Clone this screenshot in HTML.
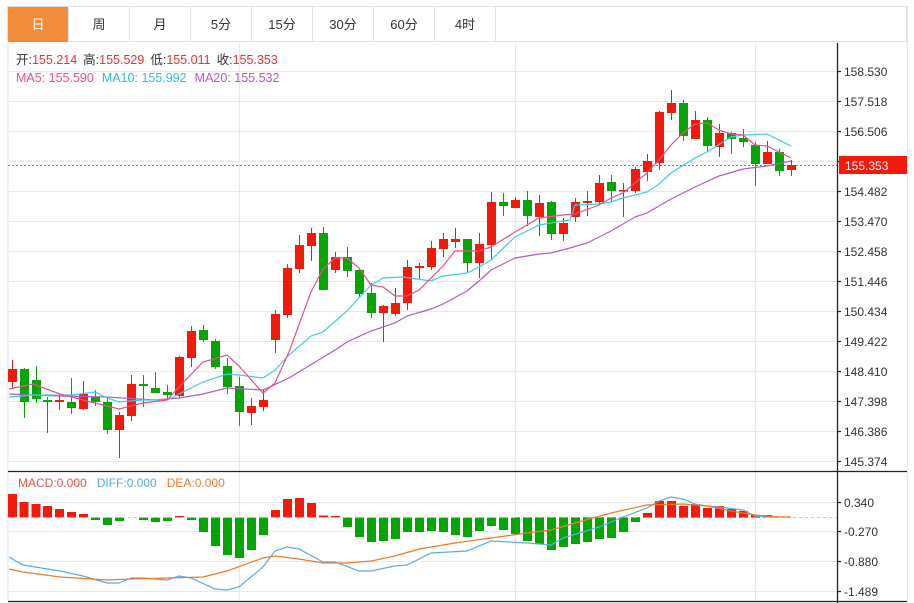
<!DOCTYPE html>
<html><head><meta charset="utf-8"><style>
html,body{margin:0;padding:0;background:#fff;width:914px;height:603px;overflow:hidden;font-family:"Liberation Sans","Noto Sans CJK SC",sans-serif}
.tabs{position:absolute;left:7px;top:6px;height:36px;width:900px;border:1px solid #dde3ea;box-sizing:border-box;}
.tab{position:absolute;top:0;height:35px;width:61px;line-height:35px;text-align:center;font-size:13px;color:#333;border-right:1px solid #dde3ea;box-sizing:border-box}
svg{position:absolute;left:0;top:0}
</style></head><body>
<div class="tabs">
<div class="tab" style="left:0;background:#f08c3a;color:#fff">日</div>
<div class="tab" style="left:61px">周</div>
<div class="tab" style="left:122px">月</div>
<div class="tab" style="left:183px">5分</div>
<div class="tab" style="left:244px">15分</div>
<div class="tab" style="left:305px">30分</div>
<div class="tab" style="left:366px">60分</div>
<div class="tab" style="left:427px">4时</div>
</div>
<svg width="914" height="603" xmlns="http://www.w3.org/2000/svg" font-family="Liberation Sans, Noto Sans CJK SC, sans-serif">
<g stroke="#e3e9ef" stroke-width="1" fill="none">
<path d="M8 71.5H837M8 101.5H837M8 131.5H837M8 161.5H837M8 191.5H837M8 221.5H837M8 251.5H837M8 281.5H837M8 311.5H837M8 341.5H837M8 371.5H837M8 401.5H837M8 431.5H837M8 461.5H837"/>
<path d="M8 502.5H837M8 531.5H837M8 561.5H837M8 591.5H837"/>
<path d="M239.5 43V601M515.5 43V601M755.5 43V601M8 43V601M907.5 6V603"/>
</g>
<g stroke="#222" stroke-width="1.3" fill="none">
<path d="M8 471.5H907M8 601.5H907M837.5 43V603"/>
<path d="M837 71.5h4M837 101.5h4M837 131.5h4M837 161.5h4M837 191.5h4M837 221.5h4M837 251.5h4M837 281.5h4M837 311.5h4M837 341.5h4M837 371.5h4M837 401.5h4M837 431.5h4M837 461.5h4M837 502.5h4M837 531.5h4M837 561.5h4M837 591.5h4"/>
</g>
<g font-size="12" fill="#333">
<text x="844" y="76">158.530</text><text x="844" y="106">157.518</text><text x="844" y="136">156.506</text>
<text x="844" y="196">154.482</text><text x="844" y="226">153.470</text><text x="844" y="256">152.458</text><text x="844" y="286">151.446</text>
<text x="844" y="316">150.434</text><text x="844" y="346">149.422</text><text x="844" y="376">148.410</text><text x="844" y="406">147.398</text>
<text x="844" y="436">146.386</text><text x="844" y="466">145.374</text>
<text x="844" y="507">0.340</text><text x="844" y="536">-0.270</text><text x="844" y="566">-0.880</text><text x="844" y="596">-1.489</text>
</g>
<path d="M8 165.5H837" stroke="#f04a3a" stroke-dasharray="2,2" stroke-width="1"/>
<rect x="839" y="156" width="68" height="18" fill="#f21b0b"/>
<text x="845" y="170" font-size="12" fill="#fff">155.353</text>
<path d="M517 517.5H837" stroke="#9fd4ea" stroke-dasharray="3,3"/>
<g font-size="12.5">
<text x="16" y="64"><tspan fill="#333">开:</tspan><tspan fill="#f0302a">155.214</tspan><tspan fill="#333" dx="6">高:</tspan><tspan fill="#f0302a">155.529</tspan><tspan fill="#333" dx="6">低:</tspan><tspan fill="#f0302a">155.011</tspan><tspan fill="#333" dx="6">收:</tspan><tspan fill="#f0302a">155.353</tspan></text>
<text x="16" y="82"><tspan fill="#ef4f86">MA5: 155.590</tspan><tspan fill="#2cc0d6" dx="8">MA10: 155.992</tspan><tspan fill="#b45ac8" dx="8">MA20: 155.532</tspan></text>
<text x="18" y="487" font-size="12"><tspan fill="#f0504a">MACD:0.000</tspan><tspan fill="#4fa8f0" dx="10">DIFF:0.000</tspan><tspan fill="#f07a28" dx="10">DEA:0.000</tspan></text>
</g>
<g fill="#f21b0b" stroke="#f21b0b" stroke-width="1">
<path fill="none" d="M12.5 360V388M59.5 394V410M83.5 381V410M119.5 412V458M131.5 375V421M179.5 356V398M191.5 326V367M251.5 398V425M263.5 389V411M275.5 310V353M287.5 264V318M299.5 235V273M311.5 228V261M335.5 252V273M383.5 305V342M395.5 288V316M407.5 260V310M419.5 263V279M431.5 241V270M443.5 233V257M455.5 228V248M479.5 233V278M491.5 192V260M515.5 197V208M539.5 195V236M563.5 218V241M575.5 198V222M587.5 191V216M599.5 175V205M623.5 183V217M635.5 167V193M647.5 154V181M659.5 111V170M671.5 90V120M695.5 111V139M719.5 124V157M767.5 141V164M791.5 160V176"/>
<g stroke="none">
<rect x="8" y="369" width="9" height="13"/><rect x="55" y="400" width="9" height="2"/><rect x="79" y="394" width="9" height="15"/><rect x="115" y="415" width="9" height="15"/><rect x="127" y="384" width="9" height="32"/><rect x="175" y="357" width="9" height="39"/><rect x="187" y="331" width="9" height="27"/><rect x="247" y="406" width="9" height="7"/><rect x="259" y="400" width="9" height="7"/><rect x="271" y="314" width="9" height="26"/><rect x="283" y="268" width="9" height="47"/><rect x="295" y="245" width="9" height="24"/><rect x="307" y="233" width="9" height="13"/><rect x="331" y="257" width="9" height="13"/><rect x="379" y="306" width="9" height="7"/><rect x="391" y="303" width="9" height="11"/><rect x="403" y="267" width="9" height="36"/><rect x="415" y="266" width="9" height="2"/><rect x="427" y="248" width="9" height="19"/><rect x="439" y="239" width="9" height="10"/><rect x="451" y="239" width="9" height="3"/><rect x="475" y="244" width="9" height="19"/><rect x="487" y="202" width="9" height="43"/><rect x="511" y="200" width="9" height="8"/><rect x="535" y="203" width="9" height="14"/><rect x="559" y="223" width="9" height="11"/><rect x="571" y="202" width="9" height="15"/><rect x="583" y="201" width="9" height="2"/><rect x="595" y="183" width="9" height="19"/><rect x="619" y="190" width="9" height="1.5"/><rect x="631" y="169" width="9" height="22"/><rect x="643" y="161" width="9" height="11"/><rect x="655" y="112" width="9" height="51"/><rect x="667" y="103" width="9" height="10"/><rect x="691" y="120" width="9" height="19"/><rect x="715" y="133" width="9" height="14"/><rect x="763" y="152" width="9" height="12"/><rect x="787" y="165" width="9" height="5"/>
</g></g>
<g fill="#05a505" stroke="#05a505" stroke-width="1">
<path fill="none" d="M24.5 368V418M36.5 366V403M47.5 397V433M71.5 378V414M95.5 390V406M107.5 398V434M143.5 375V407M155.5 372V393M167.5 385V399M203.5 325V342M215.5 339V369M227.5 358V394M239.5 377V426M323.5 227V290M347.5 247V277M359.5 269V297M371.5 283V318M467.5 239V272M503.5 193V216M527.5 191V226M551.5 201V240M611.5 175V202M683.5 100V141M707.5 117V152M731.5 132V154M743.5 129V147M755.5 142V186M779.5 149V176"/>
<g stroke="none">
<rect x="20" y="369" width="9" height="33"/><rect x="32" y="380" width="9" height="19"/><rect x="43" y="400" width="9" height="2"/><rect x="67" y="402" width="9" height="6"/><rect x="91" y="397" width="9" height="5"/><rect x="103" y="402" width="9" height="28"/><rect x="139" y="384" width="9" height="2"/><rect x="151" y="388" width="9" height="5"/><rect x="163" y="392" width="9" height="3"/><rect x="199" y="330" width="9" height="10"/><rect x="211" y="341" width="9" height="26"/><rect x="223" y="366" width="9" height="21"/><rect x="235" y="386" width="9" height="26"/><rect x="319" y="233" width="9" height="57"/><rect x="343" y="257" width="9" height="14"/><rect x="355" y="270" width="9" height="24"/><rect x="367" y="293" width="9" height="20"/><rect x="463" y="239" width="9" height="24"/><rect x="499" y="202" width="9" height="4"/><rect x="523" y="200" width="9" height="16"/><rect x="547" y="202" width="9" height="32"/><rect x="607" y="182" width="9" height="9"/><rect x="679" y="103" width="9" height="33"/><rect x="703" y="120" width="9" height="26"/><rect x="727" y="133" width="9" height="6"/><rect x="739" y="138" width="9" height="4"/><rect x="751" y="145" width="9" height="19"/><rect x="775" y="152" width="9" height="19"/>
</g></g>
<g fill="none" stroke-width="1.2">
<polyline stroke="#b45ac8" points="9,394 60,396 107,397 155,400 179,398 203,394 227,388 263,390 289,378 335,350 347,342 371,331 395,323 407,316 431,309 443,304 467,291 479,281 491,270 515,258 539,254 551,253 570,248 587,243 611,231 635,217 647,213 671,199 695,187 719,176 743,169 767,166 791,161"/>
<polyline stroke="#3fcde0" points="9,397 33,395 60,395 72,395 95,392 107,398 119,402 143,400 167,400 179,394 203,382 227,374 239,375 263,378 275,370 289,355 311,336 323,332 347,311 371,285 383,278 403,277 431,281 443,276 467,273 479,267 491,260 515,237 539,225 570,220 575,205 599,204 611,202 623,198 647,192 659,184 671,173 695,158 707,152 731,137 743,135 767,134 791,146"/>
<polyline stroke="#ef4f86" points="9,389 33,384 60,394 83,400 119,409 143,403 167,400 179,387 203,362 227,355 239,366 263,393 275,383 289,352 311,292 323,269 335,258 347,258 359,268 371,285 383,287 395,296 407,296 419,290 443,266 455,251 479,251 491,247 515,232 539,218 563,215 575,214 599,205 611,198 623,193 647,173 659,160 671,145 683,133 695,124 707,123 719,130 731,134 743,135 755,145 767,146 779,152 791,158"/>
</g>
<g fill="#f21b0b">
<rect x="8" y="494" width="9" height="23.5"/><rect x="19.5" y="502" width="9" height="15.5"/><rect x="31.5" y="504" width="9" height="13.5"/><rect x="43" y="506" width="9" height="11.5"/><rect x="55" y="509" width="9" height="8.5"/><rect x="67" y="512" width="9" height="5.5"/><rect x="79" y="514" width="9" height="3.5"/><rect x="175" y="516" width="9" height="1.5"/><rect x="271" y="510" width="9" height="7.5"/><rect x="283" y="499" width="9" height="18.5"/><rect x="295" y="498" width="9" height="19.5"/><rect x="307" y="503" width="9" height="14.5"/><rect x="319" y="515.5" width="9" height="2"/><rect x="331" y="516" width="9" height="1.5"/><rect x="643" y="513" width="9" height="4.5"/><rect x="655" y="501" width="9" height="16.5"/><rect x="667" y="501" width="9" height="16.5"/><rect x="679" y="506" width="9" height="11.5"/><rect x="691" y="504" width="9" height="13.5"/><rect x="703" y="508" width="9" height="9.5"/><rect x="715" y="506" width="9" height="11.5"/><rect x="727" y="509" width="9" height="8.5"/><rect x="739" y="511" width="9" height="6.5"/><rect x="751" y="515" width="9" height="2.5"/><rect x="763" y="515" width="9" height="2.5"/>
</g>
<g fill="#05a505">
<rect x="91" y="517.5" width="9" height="2.5"/><rect x="103" y="517.5" width="9" height="7.5"/><rect x="115" y="517.5" width="9" height="3.5"/><rect x="139" y="517.5" width="9" height="2.5"/><rect x="151" y="517.5" width="9" height="4.5"/><rect x="163" y="517.5" width="9" height="3.5"/><rect x="187" y="517.5" width="9" height="2.5"/><rect x="199" y="517.5" width="9" height="14.5"/><rect x="211" y="517.5" width="9" height="28.5"/><rect x="223" y="517.5" width="9" height="37.5"/><rect x="235" y="517.5" width="9" height="40.5"/><rect x="247" y="517.5" width="9" height="32.5"/><rect x="259" y="517.5" width="9" height="17.5"/><rect x="343" y="517.5" width="9" height="9.5"/><rect x="355" y="517.5" width="9" height="19.5"/><rect x="367" y="517.5" width="9" height="24.5"/><rect x="379" y="517.5" width="9" height="23.5"/><rect x="391" y="517.5" width="9" height="21.5"/><rect x="403" y="517.5" width="9" height="14.5"/><rect x="415" y="517.5" width="9" height="14.5"/><rect x="427" y="517.5" width="9" height="13.5"/><rect x="439" y="517.5" width="9" height="14.5"/><rect x="451" y="517.5" width="9" height="17.5"/><rect x="463" y="517.5" width="9" height="19.5"/><rect x="475" y="517.5" width="9" height="13.5"/><rect x="487" y="517.5" width="9" height="8.5"/><rect x="499" y="517.5" width="9" height="12.5"/><rect x="511" y="517.5" width="9" height="16.5"/><rect x="523" y="517.5" width="9" height="23.5"/><rect x="535" y="517.5" width="9" height="26.5"/><rect x="547" y="517.5" width="9" height="32.5"/><rect x="559" y="517.5" width="9" height="29.5"/><rect x="571" y="517.5" width="9" height="26.5"/><rect x="583" y="517.5" width="9" height="24.5"/><rect x="595" y="517.5" width="9" height="21.5"/><rect x="607" y="517.5" width="9" height="20.5"/><rect x="619" y="517.5" width="9" height="14.5"/><rect x="631" y="517.5" width="9" height="4.5"/>
</g>
<path d="M8 517.5H517" stroke="#9fd4ea" stroke-dasharray="3,3"/>
<g fill="none" stroke-width="1.2">
<polyline stroke="#5aaaf0" points="9,557 23,565 60,571 83,576 107,583 119,583 131,578 143,578 167,580 179,576 191,578 215,589 227,590 239,587 263,567 275,551 287,547 299,549 323,562 335,562 359,571 371,571 395,566 407,565 431,553 467,551 491,541 527,543 551,545 563,538 599,527 623,517 647,508 659,501 671,497 683,499 695,504 707,506 719,507 743,510 755,516 767,517 779,517"/>
<polyline stroke="#f07a28" points="9,569 23,572 60,577 107,580 131,579 167,578 203,577 227,571 263,558 275,556 299,559 323,563 347,563 371,561 395,556 419,549 455,543 491,538 527,533 551,530 575,523 611,513 647,505 683,504 707,506 731,511 755,515 779,517 791,517"/>
</g>
</svg>
</body></html>
